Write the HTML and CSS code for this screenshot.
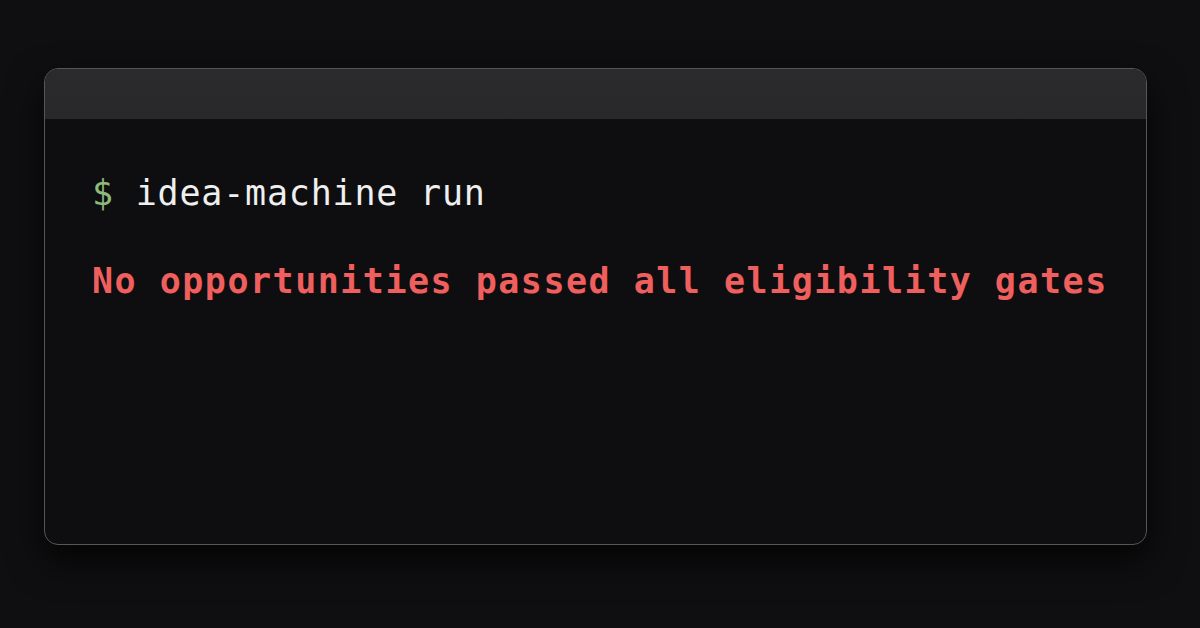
FILE: index.html
```html
<!DOCTYPE html>
<html>
<head>
<meta charset="utf-8">
<link rel="stylesheet" href="styles.css">
</head>
<body>
<div class="window">
  <div class="titlebar"></div>
  <div class="term">
    <div class="line cmd"><span class="prompt">$</span> idea-machine run</div>
    <div class="line err">No opportunities passed all eligibility gates</div>
  </div>
</div>
</body>
</html>
```
FILE: styles.css
```css
html, body {
  margin: 0;
  padding: 0;
  background: #0f0f11;
  width: 1200px;
  height: 628px;
  overflow: hidden;
}
body {
  padding: 68px 0 0 44px;
  box-sizing: border-box;
}
.window {
  width: 1103px;
  height: 477px;
  box-sizing: border-box;
  border: 1px solid #55555a;
  border-radius: 14px;
  background: #0e0e10;
  overflow: hidden;
  box-shadow: 0 16px 36px rgba(0,0,0,0.75);
  display: flex;
  flex-direction: column;
}
.titlebar {
  height: 50px;
  background: linear-gradient(#2b2b2d, #28282a);
  flex: none;
}
.term {
  padding: 52px 0 0 47px;
  font-family: "DejaVu Sans Mono", "Liberation Mono", monospace;
  font-size: 35px;
  line-height: 44px;
}
.line { white-space: pre; }
.cmd { color: #efefef; letter-spacing: 0.8px; }
.prompt { color: #8dbb7b; }
.err {
  margin-top: 44px;
  color: #ef5f5e;
  font-weight: bold;
  letter-spacing: 1.5px;
}
```
